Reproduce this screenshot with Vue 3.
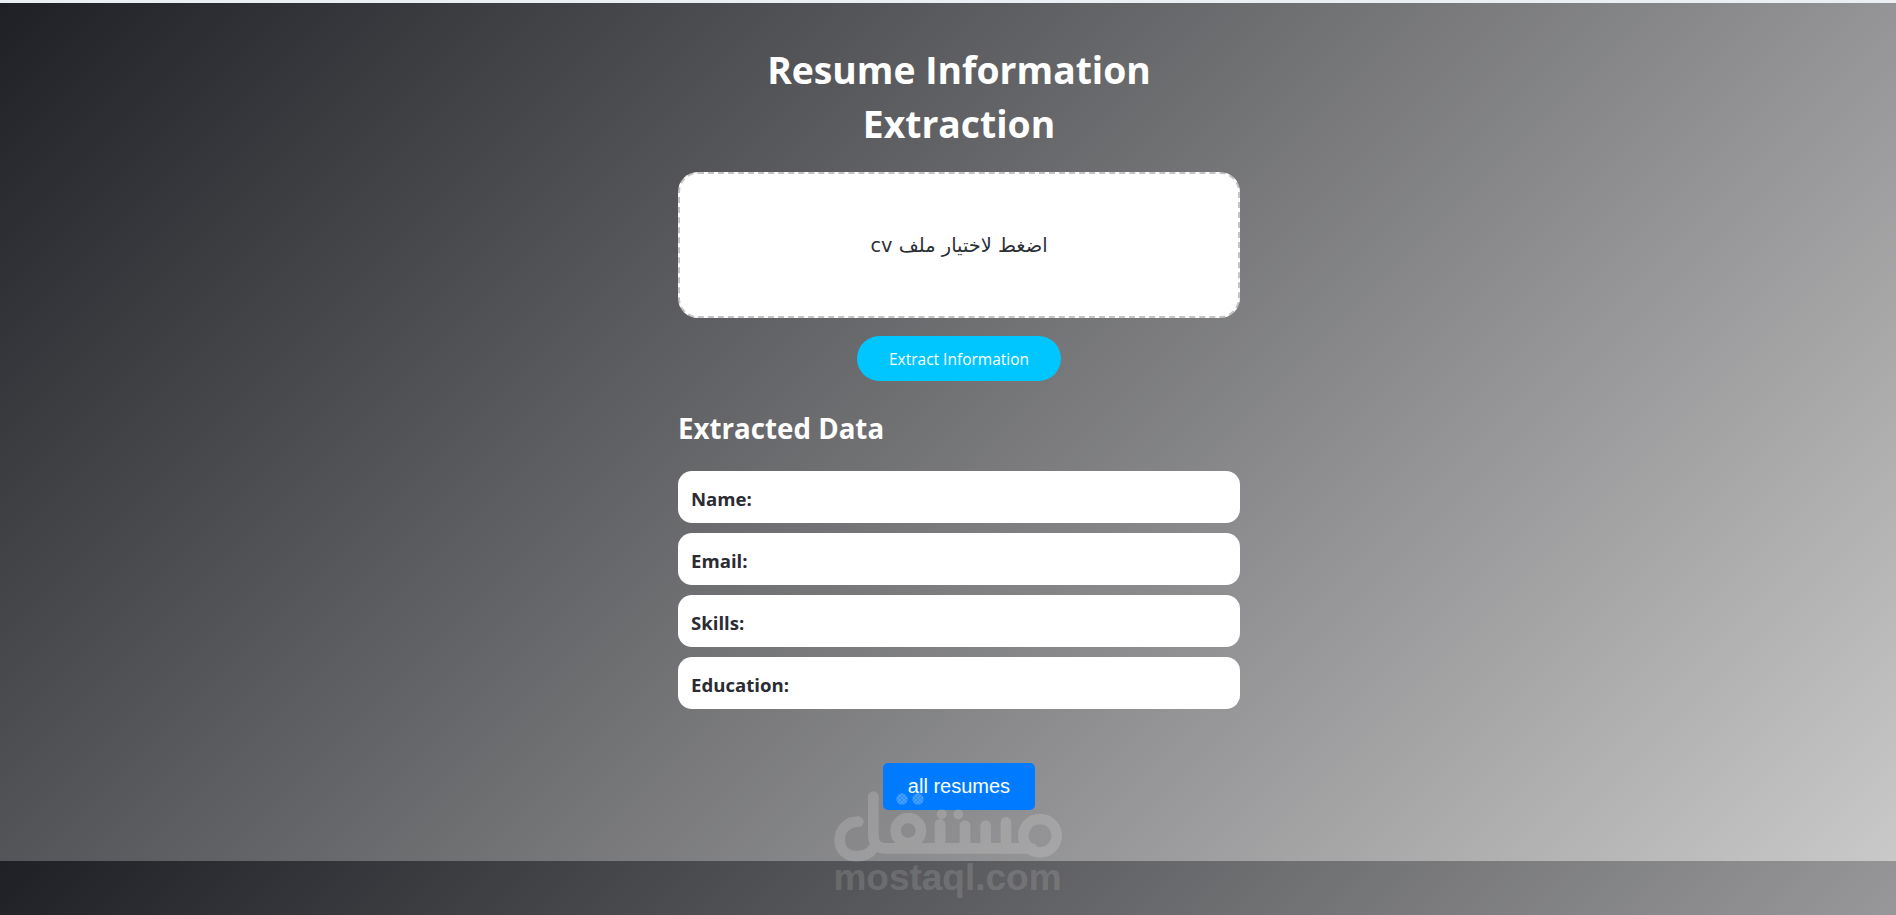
<script setup>
const fields = ['Name:', 'Email:', 'Skills:', 'Education:']
</script>

<template>
  <div class="page">
    <div class="strip"></div>
    <div class="stage">
      <main class="column">
        <h1 class="title">Resume Information<br />Extraction</h1>
        <label class="drop" dir="rtl">اضغط لاختيار ملف cv</label>
        <button class="extract" type="button">Extract Information</button>
        <h2 class="sub">Extracted Data</h2>
        <div class="rows">
          <div v-for="f in fields" :key="f" class="row"><strong>{{ f }}</strong></div>
        </div>
        <button class="all" type="button">all resumes</button>
      </main>
      <div class="mark" aria-hidden="true">
        <svg class="mark-logo" viewBox="0 0 735 240" width="245" height="80">
          <defs>
            <pattern id="dith" width="4" height="4" patternUnits="userSpaceOnUse">
              <rect width="2" height="2" fill="rgba(255,255,255,.45)" />
              <rect x="2" y="2" width="2" height="2" fill="rgba(255,255,255,.45)" />
            </pattern>
          </defs>
          <g opacity=".16">
            <g fill="none" stroke="#fff" stroke-width="32" stroke-linecap="round" stroke-linejoin="round">
              <path d="M100 110C65 110 44 135 44 165C44 195 65 214 95 214C118 214 135 205 145 190M145 35V150C145 175 160 190 180 190H620" />
              <circle cx="250" cy="137" r="38" />
              <path d="M345 118V190M420 122V190M482 122V190M543 112V190" />
              <circle cx="645" cy="152" r="50" />
            </g>
            <circle cx="350" cy="88" r="15" fill="#fff" />
            <circle cx="400" cy="88" r="15" fill="#fff" />
          </g>
          <circle cx="231" cy="42" r="17" fill="url(#dith)" />
          <circle cx="279" cy="42" r="17" fill="url(#dith)" />
        </svg>
        <div class="mark-text">mostaql.com</div>
      </div>
    </div>
  </div>
</template>

<style scoped>
.page {
  display: flex;
  flex-direction: column;
  height: 915px;
  overflow: hidden;
  font-family: "Open Sans", "Liberation Sans", sans-serif;
}
.strip {
  flex: 0 0 3px;
  background: #e9eff3;
}
.stage {
  position: relative;
  flex: 1;
  box-sizing: border-box;
  padding-left: 22px;
  background-image: linear-gradient(135deg, #1f2025, #c9c9c9);
  background-size: 100% 858px;
  background-repeat: repeat-y;
  display: flex;
  justify-content: center;
}
.column {
  width: 562px;
  display: flex;
  flex-direction: column;
  align-items: center;
  padding-top: 40px;
}
.title {
  margin: 0;
  font-size: 37.3px;
  line-height: 54px;
  font-weight: 700;
  color: #fff;
  text-align: center;
  white-space: nowrap;
}
.drop {
  box-sizing: border-box;
  width: 100%;
  height: 146px;
  margin-top: 21px;
  display: flex;
  align-items: center;
  justify-content: center;
  background: #fff;
  border: 2px dashed #c4c4c4;
  border-radius: 20px;
  font-family: "DejaVu Sans", sans-serif;
  font-size: 19.4px;
  color: #2b3036;
}
.extract {
  width: 204px;
  height: 45px;
  margin-top: 18px;
  border: 0;
  border-radius: 25px;
  background: #00c6ff;
  color: #fff;
  font-family: inherit;
  font-size: 15.5px;
}
.sub {
  align-self: flex-start;
  margin: 28px 0 0;
  font-size: 27.7px;
  line-height: 38px;
  font-weight: 700;
  color: #fff;
}
.rows {
  width: 100%;
  display: flex;
  flex-direction: column;
  gap: 10px;
  margin-top: 24px;
}
.row {
  height: 52px;
  box-sizing: border-box;
  padding: 15px 13px 0;
  background: #fff;
  border-radius: 14px;
  font-size: 18.6px;
  line-height: 26px;
  color: #2b2c33;
}
.all {
  width: 152px;
  height: 47px;
  margin-top: 54px;
  border: 0;
  border-radius: 5px;
  background: #007bff;
  color: #fff;
  font-family: "Liberation Sans", Arial, sans-serif;
  font-size: 20px;
}
.mark {
  position: absolute;
  left: 825px;
  top: 782px;
  width: 245px;
  pointer-events: none;
}
.mark-logo {
  display: block;
}
.mark-text {
  margin-top: -8px;
  text-align: center;
  font-family: "Liberation Sans", Arial, sans-serif;
  font-weight: 700;
  font-size: 37px;
  line-height: 42px;
  color: rgba(255, 255, 255, 0.15);
}
</style>
